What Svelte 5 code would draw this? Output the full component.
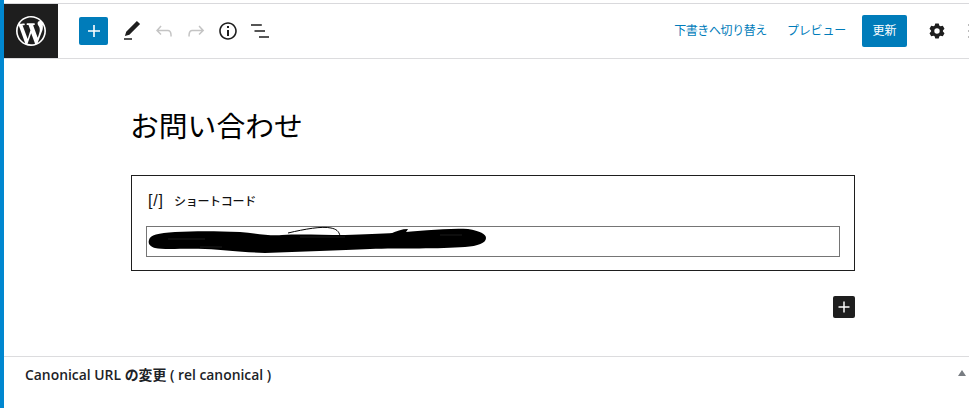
<script>
  const scribble =
    'M149 240 C150 235 158 233 175 232 C195 231 215 231 240 232 C255 233 268 236 282 235 C300 234 320 235 345 235 C365 234 380 234 395 233 C420 231 445 228 468 229 C480 231 486 234 486 238 C486 243 478 246 465 247 C440 249 400 248 370 249 C340 250 300 252 265 253 C240 252 225 250 205 249 C185 248 165 250 155 248 C149 246 148 243 149 240 Z';
</script>

<div class="page">
  <div class="strip"></div>
  <div class="editor">
    <header class="toolbar">
      <a class="logo" href="#top" aria-label="WordPress">
        <svg width="30" height="30" viewBox="0 0 20 20" fill="#fff">
          <path d="M20 10c0-5.510-4.490-10-10-10C4.480 0 0 4.490 0 10c0 5.520 4.480 10 10 10 5.510 0 10-4.480 10-10zM7.780 15.370L4.370 6.220c.55-.02 1.170-.08 1.170-.08.5-.06.44-1.130-.06-1.110 0 0-1.450.11-2.370.11-.18 0-.37 0-.58-.01C4.120 2.690 6.890 1.050 10 1.050c2.320 0 4.450.87 6.050 2.340-.68-.11-1.650.39-1.650 1.580 0 .74.45 1.360.9 2.100.35.61.55 1.360.55 2.460 0 1.490-1.400 5-1.400 5l-3.030-8.370c.54-.02.82-.17.82-.17.5-.05.44-1.250-.06-1.220 0 0-1.440.12-2.380.12-.87 0-2.330-.12-2.330-.12-.5-.03-.56 1.200-.06 1.220l.92.080 1.260 3.410zM17.410 10c.24-.64.74-1.870.43-4.250.7 1.290 1.050 2.710 1.050 4.250 0 3.290-1.730 6.240-4.400 7.780.97-2.590 1.940-5.200 2.920-7.780zM6.100 18.090C3.120 16.650 1.110 13.530 1.110 10c0-1.300.23-2.480.72-3.590C3.250 10.300 4.670 14.200 6.100 18.090zm4.030-6.630l2.580 6.980c-.85.310-1.750.47-2.710.47-.79 0-1.570-.11-2.290-.33.810-2.380 1.620-4.750 2.420-7.120z"/>
        </svg>
      </a>
      <div class="tools">
        <button class="add" aria-label="Add block">
          <svg width="24" height="24" viewBox="0 0 24 24" fill="#fff"><path d="M18 11.200h-5.200V6h-1.600v5.200H6v1.600h5.200V18h1.600v-5.200H18z"/></svg>
        </button>
        <button class="icon pen" aria-label="Tools">
          <svg width="24" height="24" viewBox="0 0 24 24" fill="#1e1e1e"><path d="M20.100 5.100L16.900 2 6.200 12.700l-1.300 4.400 4.500-1.300L20.100 5.100zM4 20.800h8v-1.500H4v1.500z"/></svg>
        </button>
        <button class="icon" aria-label="Undo">
          <svg width="24" height="24" viewBox="0 0 24 24" fill="#c4c4c4"><path d="M18.300 11.700c-.6-.6-1.400-.9-2.300-.9H6.700l2.900-3.300-1.100-1-4.500 5L8.500 16l1-1-2.700-2.700H16c.5 0 .9.200 1.300.5 1 1 1 3.400 1 4.500v.3h1.500v-.2c0-1.500 0-4.300-1.500-5.700z"/></svg>
        </button>
        <button class="icon" aria-label="Redo">
          <svg width="24" height="24" viewBox="0 0 24 24" fill="#c4c4c4"><path d="M15.600 6.500l-1.100 1 2.900 3.300H8c-.9 0-1.700.3-2.300.9-1.400 1.500-1.400 4.200-1.400 5.600v.2h1.500v-.3c0-1.100 0-3.500 1-4.500.3-.3.700-.5 1.300-.5h9.200L14.500 15l1.100 1.100 4.600-4.600-4.600-5z"/></svg>
        </button>
        <button class="icon" aria-label="Details">
          <svg width="24" height="24" viewBox="0 0 24 24" fill="#1e1e1e"><path d="M12 3.200c-4.800 0-8.800 3.900-8.800 8.800 0 4.800 3.900 8.800 8.800 8.800 4.800 0 8.800-3.900 8.800-8.800 0-4.800-4-8.800-8.800-8.800zm0 16c-4 0-7.200-3.300-7.200-7.200C4.800 8 8 4.800 12 4.800s7.200 3.300 7.200 7.200c0 4-3.200 7.200-7.200 7.200zM11 17h2v-6h-2v6zm0-8h2V7h-2v2z"/></svg>
        </button>
        <button class="icon" aria-label="List view">
          <svg width="24" height="24" viewBox="0 0 24 24" fill="#1e1e1e"><path d="M13.800 5.200H3v1.500h10.800V5.200zm-3.800 6H6.500v1.500H17v-1.500zM21 17.300h-10v1.500h10v-1.500z"/></svg>
        </button>
      </div>
      <div class="actions">
        <a class="link" href="#top">下書きへ切り替え</a>
        <a class="link preview" href="#top">プレビュー</a>
        <button class="update">更新</button>
        <button class="icon gear" aria-label="Settings">
          <svg width="24" height="24" viewBox="0 0 24 24" fill="#1e1e1e"><path fill-rule="evenodd" d="M10.290 4.500l-.7 2.230c-.4.140-.77.330-1.110.57l-2.280-.5-1.700 2.950 1.580 1.720a5.900 5.900 0 0 0 0 1.060L4.500 14.250l1.700 2.950 2.280-.5c.34.240.71.430 1.110.57l.7 2.230h3.420l.7-2.230c.4-.14.770-.33 1.110-.57l2.280.5 1.700-2.950-1.580-1.720a5.900 5.900 0 0 0 0-1.060l1.580-1.720-1.700-2.950-2.280.5a5.300 5.300 0 0 0-1.110-.57l-.7-2.230h-3.420zM12 14.700a2.700 2.700 0 1 0 0-5.400 2.700 2.700 0 0 0 0 5.400z"/></svg>
        </button>
        <button class="icon more" aria-label="Options">
          <svg width="24" height="24" viewBox="0 0 24 24" fill="#1e1e1e"><path d="M13 19h-2v-2h2v2zm0-6h-2v-2h2v2zm0-6h-2V5h2v2z"/></svg>
        </button>
      </div>
    </header>

    <main class="content">
      <h1>お問い合わせ</h1>
      <section class="block">
        <div class="label"><span class="glyph">[/]</span>ショートコード</div>
        <div class="field">
          <input type="text" aria-label="ショートコード" />
          <svg class="scribble" width="969" height="408" viewBox="0 0 969 408" aria-hidden="true">
            <path d={scribble} fill="#000"/>
            <path d="M288 233 C305 229 322 226 331 228 C336 229 339 231 340 236" fill="none" stroke="#000" stroke-width="1"/>
            <path d="M390 234 C396 231 402 229 408 229 C407 231 406 232 404 234 Z" fill="#000"/>
            <path d="M168 239 H205 M300 237 H345 M440 235 H462 M200 247 H222" stroke="#fff" stroke-width="0.3" opacity="0.35"/>
          </svg>
        </div>
      </section>
      <div class="appender">
        <button aria-label="Add block">
          <svg width="24" height="24" viewBox="0 0 24 24" fill="#fff"><path d="M18 11.200h-5.200V6h-1.600v5.200H6v1.600h5.200V18h1.600v-5.200H18z"/></svg>
        </button>
      </div>
    </main>

    <div class="metabox">
      <h2>Canonical URL の変更 ( rel canonical )</h2>
      <span class="caret"></span>
    </div>
  </div>
</div>

<style>
  :global(body) {
    margin: 0;
    background: #fff;
    overflow: hidden;
  }

  .page {
    display: flex;
    width: 969px;
    height: 408px;
    overflow: hidden;
    font-family: "Open Sans", "Noto Sans CJK JP", sans-serif;
    color: #1e1e1e;
  }

  .strip {
    flex: none;
    width: 4px;
    background: #0087d0;
  }

  .editor {
    flex: 1;
    min-width: 0;
    display: flex;
    flex-direction: column;
    border-top: 1px solid #d9d9dc;
    margin-top: 3px;
  }

  .toolbar {
    flex: none;
    height: 54px;
    display: flex;
    align-items: center;
    border-bottom: 1px solid #dcdcde;
  }

  .logo {
    flex: none;
    width: 54px;
    height: 54px;
    background: #1e1e1e;
    display: flex;
    align-items: center;
    justify-content: center;
  }

  .tools {
    display: flex;
    align-items: center;
    margin-left: 21px;
    gap: 8px;
  }

  button {
    border: 0;
    padding: 0;
    background: none;
    display: flex;
    align-items: center;
    justify-content: center;
    font-family: inherit;
  }

  .add {
    width: 29px;
    height: 28px;
    border-radius: 2px;
    background: #007cba;
    margin-right: 4px;
  }

  .icon {
    flex: none;
    width: 24px;
    height: 28px;
  }

  .actions {
    margin-left: auto;
    margin-right: -12px;
    display: flex;
    align-items: center;
    white-space: nowrap;
  }

  .link {
    font-size: 12px;
    color: #007cba;
    text-decoration: none;
    letter-spacing: -0.4px;
    padding-bottom: 3px;
  }

  .preview {
    margin-left: 20px;
    letter-spacing: -0.2px;
  }

  .update {
    margin-left: 16px;
    width: 45px;
    height: 32px;
    border-radius: 2px;
    background: #007cba;
    color: #fff;
    font-size: 12px;
    padding-bottom: 2px;
  }

  .gear {
    margin-left: 18px;
  }

  .more {
    margin-left: 8px;
    opacity: 0.3;
  }

  .content {
    flex: 1;
    min-height: 0;
    padding: 0 114px 0 127px;
  }

  h1 {
    margin: 47px 0 0 -1px;
    font-size: 28.8px;
    line-height: 40px;
    font-weight: 400;
    color: #000;
  }

  .block {
    margin-top: 29px;
    height: 94px;
    border: 1px solid #1e1e1e;
    padding: 0 14px;
  }

  .label {
    margin-top: 15px;
    height: 20px;
    display: flex;
    align-items: center;
    font-size: 12px;
    font-weight: 500;
    color: #111;
    letter-spacing: -0.3px;
  }

  .glyph {
    flex: none;
    box-sizing: border-box;
    width: 28px;
    padding-left: 2px;
    font-family: "Liberation Sans", sans-serif;
    font-size: 16px;
    font-weight: 400;
    letter-spacing: 0.8px;
  }

  .field {
    margin-top: 15px;
    position: relative;
  }

  input {
    display: block;
    width: 100%;
    height: 31px;
    box-sizing: border-box;
    border: 1px solid #757575;
    background: #fff;
    margin: 0;
  }

  .scribble {
    position: absolute;
    left: -146px;
    top: -226px;
    pointer-events: none;
  }

  .appender {
    margin-top: 25px;
    display: flex;
    justify-content: flex-end;
  }

  .appender button {
    width: 22px;
    height: 22px;
    border-radius: 2px;
    background: #1e1e1e;
  }

  .metabox {
    flex: none;
    height: 51px;
    border-top: 1px solid #dcdcde;
    position: relative;
  }

  h2 {
    margin: 9px 0 0 21px;
    font-size: 13.9px;
    line-height: 18px;
    font-weight: 600;
    color: #1d2327;
  }

  .caret {
    position: absolute;
    right: 3px;
    top: 13px;
    border-left: 4px solid transparent;
    border-right: 4px solid transparent;
    border-bottom: 6px solid #787c82;
  }
</style>
